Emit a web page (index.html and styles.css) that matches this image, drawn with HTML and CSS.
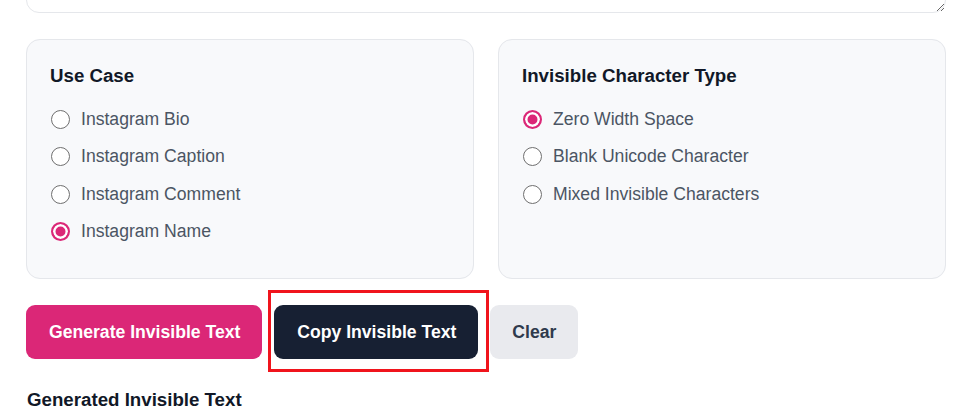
FILE: index.html
```html
<!DOCTYPE html>
<html lang="en">
<head>
<meta charset="utf-8">
<title>Invisible Text Generator</title>
<link rel="stylesheet" href="styles.css">
</head>
<body>
<main class="tool">
  <textarea class="input-area" aria-label="Text"></textarea>

  <div class="options">
    <fieldset class="card">
      <legend class="card-title">Use Case</legend>
      <label class="option"><input type="radio" name="use" class="radio"><span>Instagram Bio</span></label>
      <label class="option"><input type="radio" name="use" class="radio"><span>Instagram Caption</span></label>
      <label class="option"><input type="radio" name="use" class="radio"><span>Instagram Comment</span></label>
      <label class="option"><input type="radio" name="use" class="radio" checked><span>Instagram Name</span></label>
    </fieldset>
    <fieldset class="card">
      <legend class="card-title">Invisible Character Type</legend>
      <label class="option"><input type="radio" name="type" class="radio" checked><span>Zero Width Space</span></label>
      <label class="option"><input type="radio" name="type" class="radio"><span>Blank Unicode Character</span></label>
      <label class="option"><input type="radio" name="type" class="radio"><span>Mixed Invisible Characters</span></label>
    </fieldset>
  </div>

  <div class="actions">
    <button class="btn btn-primary" type="button">Generate Invisible Text</button>
    <div class="highlight-wrap">
      <button class="btn btn-dark" type="button">Copy Invisible Text</button>
      <span class="highlight" aria-hidden="true"></span>
    </div>
    <button class="btn btn-light" type="button">Clear</button>
  </div>

  <h2 class="result-title">Generated Invisible Text</h2>
</main>
</body>
</html>
```

FILE: styles.css
```css
* { box-sizing: border-box; }

html, body {
  margin: 0;
  padding: 0;
  background: #ffffff;
  overflow: hidden;
}

body {
  font-family: "Liberation Sans", Arial, sans-serif;
  color: #111827;
}

.tool {
  width: 920px;
  margin-left: 26px;
}

.input-area {
  display: block;
  width: 100%;
  height: 80px;
  margin: -67px 0 0 0;
  border: 1px solid #e5e7eb;
  border-radius: 13px;
  background: #ffffff;
  resize: vertical;
  font: inherit;
}

.options {
  display: grid;
  grid-template-columns: 1fr 1fr;
  gap: 24px;
  margin-top: 26px;
}

.card {
  margin: 0;
  min-width: 0;
  background: #f8f9fb;
  border: 1px solid #e5e7eb;
  border-radius: 14px;
  padding: 22px 23px 34px;
  display: flex;
  flex-direction: column;
  gap: 11px;
  height: 240px;
}

.card-title {
  float: left;
  width: 100%;
  padding: 0;
  margin: 0 0 5px 0;
  font-size: 18.7px;
  line-height: 28px;
  font-weight: 700;
  color: #111827;
}

.option {
  display: flex;
  align-items: center;
  gap: 11px;
  font-size: 17.6px;
  line-height: 26.4px;
  color: #4b5563;
  cursor: pointer;
}

.radio {
  appearance: none;
  -webkit-appearance: none;
  margin: 0 0 0 1px;
  width: 19px;
  height: 19px;
  flex: none;
  border: 1.5px solid #6f6f6f;
  border-radius: 50%;
  background: #ffffff;
}

.radio:checked {
  border: 2px solid #db2777;
  background: #db2777;
  box-shadow: inset 0 0 0 2.5px #ffffff;
}

.actions {
  display: flex;
  align-items: center;
  gap: 12px;
  margin-top: 26px;
}

.btn {
  font-family: "Liberation Sans", Arial, sans-serif;
  font-size: 17.6px;
  line-height: 26px;
  font-weight: 700;
  border: 0;
  border-radius: 9px;
  padding: 14px 22px;
  cursor: pointer;
}

.btn-primary {
  background: #db2777;
  color: #ffffff;
  padding-left: 23px;
  padding-right: 22px;
}

.btn-dark {
  background: #172033;
  color: #ffffff;
  padding-left: 23px;
  padding-right: 22px;
  display: block;
}

.btn-light {
  background: #e9eaee;
  color: #2f3a4c;
}

.highlight-wrap {
  position: relative;
}

.highlight {
  position: absolute;
  left: -6px;
  top: -15px;
  right: -11px;
  bottom: -13px;
  border: 3px solid #f0141c;
  pointer-events: none;
}

.result-title {
  margin: 27px 0 0 1px;
  font-size: 18.7px;
  line-height: 28px;
  font-weight: 700;
  color: #111827;
}
```
